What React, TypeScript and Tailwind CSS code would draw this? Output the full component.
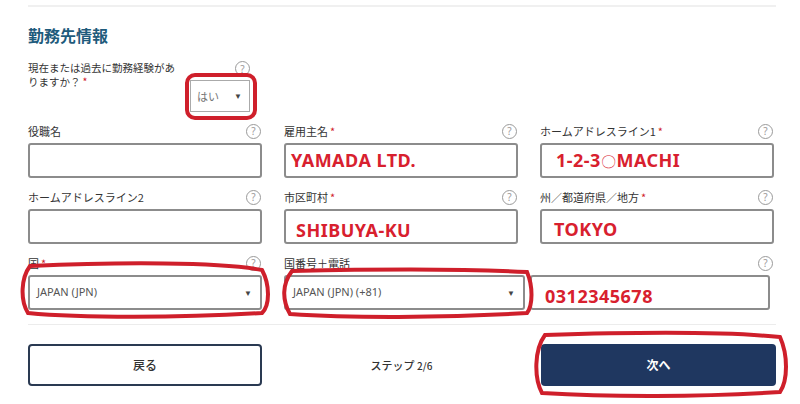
import React from "react";

const jp = { fontFamily: '"Noto Sans CJK JP", "Noto Sans", sans-serif' };
const val = { fontFamily: '"Noto Sans", "Liberation Sans", sans-serif' };

function Help() {
  return (
    <span className="flex h-[15px] w-[15px] items-center justify-center rounded-full border border-[#9a9a9a] text-[10px] leading-none text-[#9a9a9a]" style={val}>
      ?
    </span>
  );
}

function Label({ text, required }: { text: string; required?: boolean }) {
  return (
    <div className="flex h-[14px] items-center justify-between pr-[1px]">
      <span className="text-[11px] text-[#333]" style={jp}>
        {text}
        {required && <span className="ml-[2px] text-[#d0202a]">*</span>}
      </span>
      <Help />
    </div>
  );
}

function TextBox({ value, offset = "pl-[6px]" }: { value?: React.ReactNode; offset?: string }) {
  return (
    <div className={`mt-[5px] flex h-[35px] items-center rounded-[3px] border-2 border-[#8c8c8c] bg-white ${offset}`}>
      <span className="text-[18px] font-bold tracking-[0.5px] text-[#d8202e]" style={val}>
        {value}
      </span>
    </div>
  );
}

function SelectBox({ value }: { value: string }) {
  return (
    <div className="mt-[5px] flex h-[35px] items-center justify-between rounded-[3px] border-2 border-[#8c8c8c] bg-white pl-[7px] pr-[8px]">
      <span className="text-[11px] text-[#555]" style={val}>
        {value}
      </span>
      <span className="text-[8px] text-[#444]">▼</span>
    </div>
  );
}

function Field({ label, required, value, offset }: { label: string; required?: boolean; value?: React.ReactNode; offset?: string }) {
  return (
    <div>
      <Label text={label} required={required} />
      <TextBox value={value} offset={offset} />
    </div>
  );
}

export default function App() {
  return (
    <div className="relative h-[404px] w-[800px] overflow-hidden bg-white">
      <div className="ml-[28px] mt-[5px] h-[2px] w-[748px] bg-[#f0f0f0]" />
      <div className="px-[28px]">
        <h2 className="mt-[18px] text-[16px] font-bold leading-[20px] text-[#1f5b7c]" style={jp}>
          勤務先情報
        </h2>

        <div className="mt-[15px] flex w-[222px] justify-between">
          <p
            className="mt-[1px] w-[150px] text-[10.5px] leading-[14px] text-[#333] after:ml-[2px] after:text-[#d0202a] after:content-['*']"
            style={jp}
          >
            現在または過去に勤務経験がありますか？
          </p>
          <div className="flex w-[60px] flex-col items-end">
            <div className="mt-[1px]">
              <Help />
            </div>
            <div className="mt-[4px] flex h-[32px] w-[60px] items-center justify-between border border-[#aaa] bg-white pl-[6px] pr-[7px]">
              <span className="text-[11px] text-[#777]" style={jp}>はい</span>
              <span className="text-[8px] text-[#444]">▼</span>
            </div>
          </div>
        </div>

        <div className="mt-[12px] grid w-[746px] grid-cols-3 gap-x-[22px] gap-y-[12px]">
          <Field label="役職名" />
          <Field label="雇用主名" required value="YAMADA LTD." offset="pl-[5px]" />
          <Field
            label="ホームアドレスライン1"
            required
            value={
              <>
                1-2-3<span className="text-[15px] font-normal">〇</span>MACHI
              </>
            }
            offset="pl-[14px]"
          />
          <Field label="ホームアドレスライン2" />
          <Field label="市区町村" required value="SHIBUYA-KU" offset="pl-[10px] pt-[8px]" />
          <Field label="州／都道府県／地方" required value="TOKYO" offset="pl-[12px] pt-[5px]" />
          <div>
            <Label text="国" required />
            <SelectBox value="JAPAN (JPN)" />
          </div>
          <div className="col-span-2">
            <Label text="国番号＋電話" />
            <div className="flex gap-[5px] pr-[4px]">
              <div className="w-[241px]">
                <SelectBox value="JAPAN (JPN) (+81)" />
              </div>
              <div className="flex-1">
                <TextBox value="0312345678" offset="pl-[13px] pt-[8px]" />
              </div>
            </div>
          </div>
        </div>

        <div className="mt-[14px] h-px w-[748px] bg-[#ececec]" />

        <div className="mt-[19px] flex w-[748px] items-center justify-between">
          <button className="flex h-[42px] w-[234px] items-center justify-center rounded-[4px] border-2 border-[#2a3a52] bg-white text-[12px] font-medium text-[#333]" style={jp}>
            戻る
          </button>
          <span className="text-[11px] font-medium text-[#333]" style={jp}>
            ステップ <span className="text-[10px]">2/6</span>
          </span>
          <button className="flex h-[42px] w-[235px] items-center justify-center rounded-[4px] bg-[#1f3760] text-[12px] font-bold text-white" style={jp}>
            次へ
          </button>
        </div>
      </div>

      <svg className="pointer-events-none absolute left-0 top-0" width="800" height="404" fill="none" stroke="#cf1f2b" strokeWidth="4">
        <rect x="187" y="75" width="68" height="43" rx="8" />
        <path d="M30 266 C 120 262, 220 262, 262 270 C 270 285, 270 305, 262 313 C 180 318, 80 318, 28 313 C 20 300, 21 278, 30 266 Z" />
        <path d="M292 271 C 380 269, 470 269, 527 272 C 533 286, 533 305, 527 313 C 440 318, 350 318, 290 314 C 282 300, 282 284, 292 271 Z" />
        <path d="M545 335 C 640 332, 730 332, 780 337 C 788 355, 788 380, 780 392 C 700 397, 610 397, 542 393 C 534 378, 534 350, 545 335 Z" />
      </svg>
    </div>
  );
}
